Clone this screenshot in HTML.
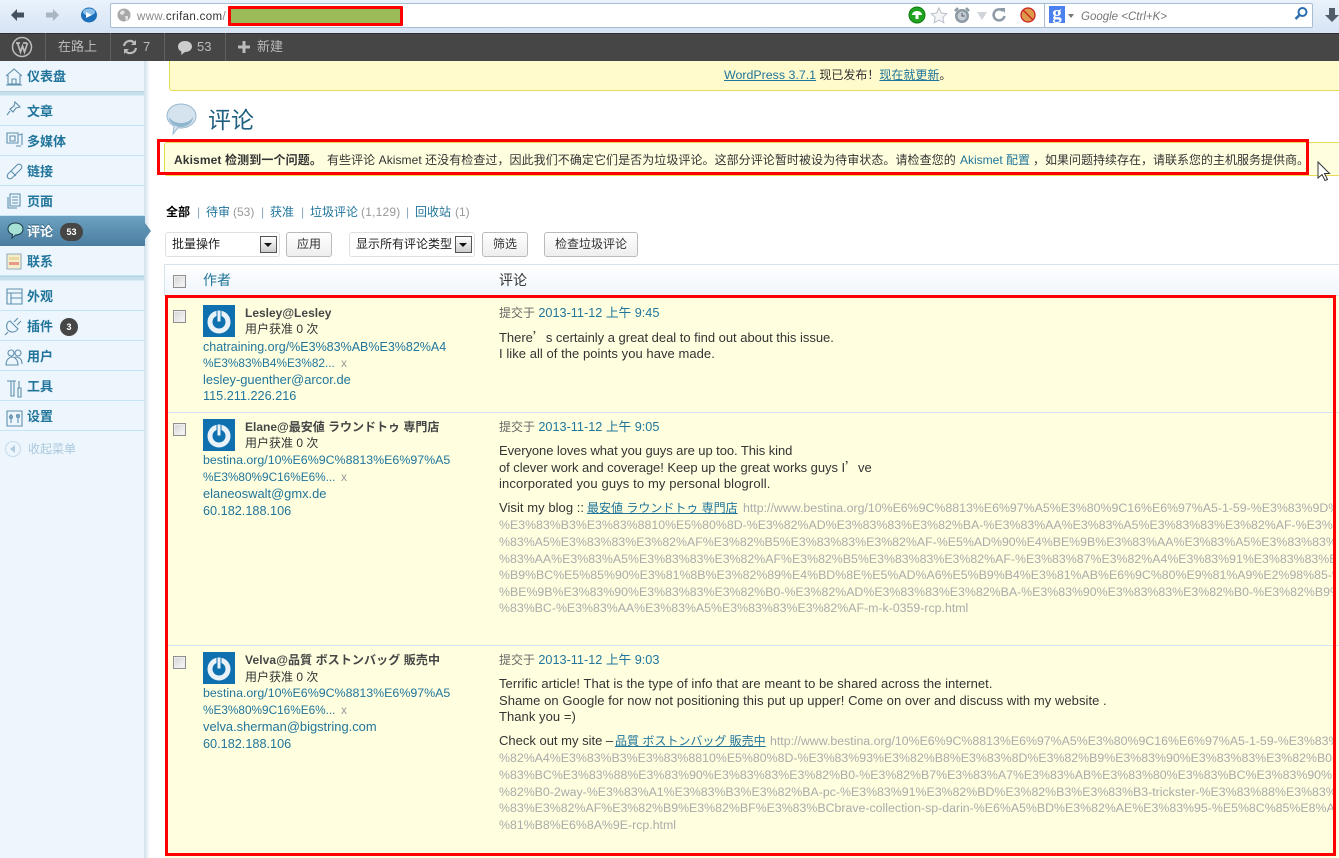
<!DOCTYPE html>
<html><head><meta charset="utf-8"><title>评论</title>
<style>
html,body{margin:0;padding:0;width:1339px;height:858px;overflow:hidden;background:#fff}
body{position:relative;font-family:"Liberation Sans","Noto Sans CJK SC",sans-serif;font-size:12px;color:#333}
.a{position:absolute}
.t{position:absolute;white-space:nowrap;line-height:16px;height:16px}
a{color:#21759b;text-decoration:none}
u{text-decoration:underline}
.m{font-weight:bold;color:#21759b;font-size:13px;left:27px}
.sep{position:absolute;left:0;width:144px;height:1px;background:#c6e4f7}
.cb{position:absolute;width:11px;height:11px;border:1px solid #8f8f8f;background:linear-gradient(135deg,#d4d4d4,#fafafa);box-shadow:inset 0 0 0 1px #eee}
.btn{position:absolute;height:23px;border:1px solid #bbb;border-radius:3px;background:linear-gradient(#fff,#eee);text-align:center;line-height:22px;color:#333;box-sizing:content-box}
.sel{position:absolute;height:23px;border:1px solid #dfdfdf;border-radius:3px;background:#fff;line-height:23px;color:#222;padding-left:6px;box-sizing:content-box}
.dd{position:absolute;right:2px;top:3px;width:15px;height:15px;border:1px solid #555;background:linear-gradient(#fff,#ccc)}
.dd:after{content:"";position:absolute;left:3px;top:6px;border:4px solid transparent;border-top:4px solid #111;border-bottom:0}
.row{position:absolute;left:165px;width:1174px;background:#ffffe0}
.ul{color:#aaa;font-size:12.35px;left:499px;width:835px;overflow:hidden;height:17px}
.c{left:499px;color:#333;font-size:13px;letter-spacing:.05px}
.q{font-family:"Noto Sans CJK SC",sans-serif}
.d{font-size:12.7px}
.u1{font-size:12.4px}
.u2{font-size:11.8px}
.e{font-size:12.9px}
.ip{font-size:12.7px}
.red{position:absolute;border:3px solid #f00;box-sizing:border-box}
.pill{position:absolute;background:#464646;color:#fff;border-radius:10px;font-size:9px;font-weight:bold;text-align:center;height:18px;line-height:18px}
.bar{color:#8aa6bd}
.n{color:#999}
</style></head><body>

<!-- browser toolbar -->
<div class="a" style="left:0;top:0;width:1339px;height:33px;background:linear-gradient(#eaf2fb,#d6e4f4)"></div>
<svg class="a" style="left:0;top:0" width="110" height="33"><path d="M11 15l6-6v3.500h7v5h-7V21z" fill="#44525f"/><path d="M59 15l-6-6v3.500h-7v5h7V21z" fill="#a9b6c2"/><ellipse cx="89" cy="15" rx="8" ry="7.500" fill="#1c6fb8"/><ellipse cx="89" cy="12" rx="6" ry="3.500" fill="#8cc0ea"/><path d="M86 12l6 3-6 3z" fill="#fff"/></svg>
<div class="a" style="left:110px;top:3px;width:1021px;height:23px;background:#fff;border:1px solid #a9bdd2;border-radius:2px"></div>
<svg class="a" style="left:117px;top:8px" width="16" height="16"><circle cx="7" cy="7" r="6.500" fill="#a8a8a8"/><path d="M3 4l3-2 2 2-2 3-3-1zM8 8l3 0 0 3-2 2z" fill="#e4e4e4"/></svg>
<div class="t" style="left:137px;top:9px;color:#888;font-size:11.500px;letter-spacing:.35px">www.<span style="color:#333">crifan.com</span>/</div>
<div class="a" style="left:228px;top:6px;width:175px;height:20px;box-sizing:border-box;border:3px solid #f00;border-radius:1px;background:#9bbb59"></div>
<svg class="a" style="left:907px;top:6px" width="100" height="20"><circle cx="10" cy="9" r="8" fill="#22a322"/><circle cx="10" cy="9" r="8" fill="none" stroke="#0d7a0d"/><path d="M5 9a5 4 0 0 1 10 0h-3.500v4h-3V9z" fill="#fff"/><path d="M32 2l2.300 5 5.500.6-4 3.800 1.100 5.400-4.900-2.700-4.900 2.700 1.100-5.400-4-3.800 5.500-.6z" fill="#f3f5f7" stroke="#b9c0c8"/><circle cx="55" cy="10" r="7" fill="#8d99a4"/><circle cx="55" cy="10" r="4.500" fill="#c6ced6"/><path d="M55 7v3h3" stroke="#556" fill="none"/><path d="M48 5l3-3M62 5l-3-3" stroke="#8d99a4" stroke-width="2.500"/><path d="M70 6h10l-5 8z" fill="#cfd5db"/><path d="M96 5a5.500 5.500 0 1 0 1.500 5" fill="none" stroke="#8e9aa6" stroke-width="2.500"/><path d="M93 2l5 0 0 5z" fill="#8e9aa6"/></svg>
<svg class="a" style="left:1019px;top:6px" width="18" height="18"><circle cx="9" cy="9" r="7" fill="#dd9a4a" stroke="#c22" stroke-width="1.300"/><path d="M4 4l10 10" stroke="#c22" stroke-width="1.300"/></svg>
<div class="a" style="left:1044px;top:3px;width:267px;height:23px;background:#fff;border:1px solid #a9bdd2;border-radius:2px"></div>
<div class="a" style="left:1049px;top:6px;width:16px;height:17px;background:#4a80f0;color:#fff;font:bold 19px/15px 'Liberation Serif',serif;text-align:center;overflow:hidden">g</div>
<div class="a" style="left:1068px;top:14px;border:3px solid transparent;border-top:4px solid #777;border-bottom:0"></div>
<div class="t" style="left:1081px;top:9px;font-style:italic;color:#777;font-size:11.500px">Google &lt;Ctrl+K&gt;</div>
<svg class="a" style="left:1293px;top:6px" width="16" height="16"><circle cx="9.500" cy="6" r="4" fill="none" stroke="#2a6db0" stroke-width="2"/><path d="M6.500 9l-4 4" stroke="#2a6db0" stroke-width="2.500"/></svg>
<svg class="a" style="left:1325px;top:7px" width="14" height="18"><path d="M4 1h6v7h4l-7 7-7-7h4z" fill="#505c68"/></svg>

<!-- admin bar -->
<div class="a" style="left:0;top:33px;width:1339px;height:28px;background:#464646;border-top:1px solid #2f2f2f;box-sizing:border-box"></div>
<svg class="a" style="left:11px;top:36px" width="22" height="22"><circle cx="11" cy="11" r="9.500" fill="none" stroke="#bbb" stroke-width="1.500"/><path d="M5 7h4M12 7h4M6.500 7l3 9 2-6 2 6 3-9" fill="none" stroke="#bbb" stroke-width="1.700"/></svg>
<div class="a" style="left:45px;top:33px;width:1px;height:28px;background:#606060"></div>
<div class="a" style="left:110px;top:33px;width:1px;height:28px;background:#606060"></div>
<div class="a" style="left:164px;top:33px;width:1px;height:28px;background:#606060"></div>
<div class="a" style="left:225px;top:33px;width:1px;height:28px;background:#606060"></div>
<div class="t" style="left:58px;top:39px;color:#bbb;font-size:13px">在路上</div>
<svg class="a" style="left:122px;top:39px" width="16" height="16"><path d="M2 7a6 6 0 0 1 10.500-3M14 9a6 6 0 0 1-10.500 3" fill="none" stroke="#bbb" stroke-width="2.200"/><path d="M14 1v5h-5zM2 15v-5h5z" fill="#bbb"/></svg>
<div class="t" style="left:143px;top:39px;color:#bbb;font-size:13px">7</div>
<svg class="a" style="left:177px;top:40px" width="16" height="16"><path d="M8 1c4 0 7 2.300 7 5.500S12 12 8 12l-4 3 .5-3.500C2 10.500 1 8.500 1 6.500 1 3.300 4 1 8 1z" fill="#ccc"/></svg>
<div class="t" style="left:197px;top:39px;color:#bbb;font-size:13px">53</div>
<svg class="a" style="left:238px;top:41px" width="12" height="12"><path d="M4.500 0h3v4.500H12v3H7.500V12h-3V7.500H0v-3h4.500z" fill="#bbb"/></svg>
<div class="t" style="left:257px;top:39px;color:#bbb;font-size:13px">新建</div>

<!-- sidebar -->
<div class="a" style="left:0;top:61px;width:145px;height:797px;background:#eef6fd"></div>
<div class="a" style="left:144px;top:61px;width:6px;height:797px;background:linear-gradient(90deg,#cfdfea,#fff)"></div>
<div class="a" style="left:0;top:91px;width:144px;height:5px;background:#c6dfeb;border-top:1px solid #b5d2e3;border-bottom:1px solid #d8ecf8;box-sizing:border-box"></div>
<div class="sep" style="top:125px"></div><div class="sep" style="top:155px"></div><div class="sep" style="top:185px"></div><div class="sep" style="top:215px"></div>
<div class="sep" style="top:275px"></div>
<div class="a" style="left:0;top:276px;width:144px;height:5px;background:#c6dfeb;border-top:1px solid #b5d2e3;border-bottom:1px solid #d8ecf8;box-sizing:border-box"></div>
<div class="sep" style="top:310px"></div><div class="sep" style="top:340px"></div><div class="sep" style="top:370px"></div><div class="sep" style="top:400px"></div><div class="sep" style="top:430px"></div>
<div class="a" style="left:0;top:216px;width:145px;height:30px;background:linear-gradient(#6da2c2,#4a7d9f)"></div>
<div class="a" style="left:145px;top:223px;border:8px solid transparent;border-left:6px solid #5a8dae;border-right:0"></div>

<svg class="a" style="left:0;top:61px" width="27" height="400" fill="none" stroke="#5e8fad" stroke-width="1.100">
<path d="M6 15l8-7 8 7M8 14v9h12v-9M12 23v-5h4v5M6 24h16"/>
<path d="M15 41l5 5-4 1-3 4-3-3 4-3zM10 50l-3 4"/>
<path d="M7 72h11v10H7zM10 75h5v5h-5zM19 74l3-1v11M16 85h5"/>
<path d="M8 113l9-9a2.500 2.500 0 0 1 4 4l-9 9a2.500 2.500 0 0 1-4-4zM11 110l5 5"/>
<path d="M10 133h10v12H10zM8 136v11h9M12 136h6M12 139h6M12 142h6"/>
<rect x="7" y="193" width="14" height="15" fill="#f5eecd" stroke="#9ab0bd"/><rect x="9" y="196" width="10" height="3" fill="#e8d9a0" stroke="none"/><rect x="9" y="201" width="10" height="3" fill="#e79a87" stroke="none"/>
<path d="M7 228h15v15H7zM7 232h15M11 232v11M11 237h11"/>
<path d="M10 260l8 8c-2 3-6 4-9 2s-3-6-1-9zM14 261l4-4M17 264l4-4M8 271l-3 3"/>
<circle cx="11" cy="292" r="3"/><circle cx="18" cy="292" r="3"/><path d="M6 304c0-6 4-8 6-8s6 2 6 8zM15 296c4 0 7 2 7 7"/>
<path d="M7 320h9M11 320v15h3v-15M19 320v7M18 327h3v9h-3z"/>
<path d="M7 350h15v15H7zM11 353v9M18 353v9"/><circle cx="11" cy="356" r="1.500"/><circle cx="18" cy="355" r="1.500"/>
<circle cx="13" cy="388" r="7.500" stroke="#c8dcea"/><path d="M15 384v8l-5-4z" fill="#b3cde0" stroke="none"/>
</svg>
<svg class="a" style="left:6px;top:222px" width="20" height="18"><path d="M9.500 1C14 1 17 3.500 17 7s-3 6-7.500 6L6 16l.5-3.500C3.500 11.500 2 9.500 2 7 2 3.500 5 1 9.500 1z" fill="#a7e0d4" stroke="#1c3d4c"/></svg>

<div class="t m" style="top:69px">仪表盘</div>
<div class="t m" style="top:104px">文章</div>
<div class="t m" style="top:134px">多媒体</div>
<div class="t m" style="top:164px">链接</div>
<div class="t m" style="top:194px">页面</div>
<div class="t m" style="top:224px;color:#fff;text-shadow:0 -1px 0 #2a5a78">评论</div>
<div class="pill" style="left:60px;top:223px;width:23px">53</div>
<div class="t m" style="top:254px">联系</div>
<div class="t m" style="top:289px">外观</div>
<div class="t m" style="top:319px">插件</div>
<div class="pill" style="left:60px;top:318px;width:18px">3</div>
<div class="t m" style="top:349px">用户</div>
<div class="t m" style="top:379px">工具</div>
<div class="t m" style="top:409px">设置</div>
<div class="t" style="left:28px;top:441px;color:#aac8dc">收起菜单</div>

<!-- nag -->
<div class="a" style="left:169px;top:61px;width:1170px;height:30px;background:#fffbcc;border:1px solid #e6db55;border-top:0;border-right:0;border-radius:0 0 0 3px;box-sizing:border-box"></div>
<div class="t" style="left:724px;top:67px;color:#333"><a href="#" style="font-size:12.400px"><u>WordPress 3.7.1</u></a> 现已发布！<a href="#"><u>现在就更新</u></a>。</div>

<!-- title -->
<svg class="a" style="left:166px;top:103px" width="32" height="34"><path d="M15 1c8 0 15 5 15 12s-7 12-15 12c-1 0-2 0-3-.2L7 31l1-8C4 21 1 17 1 13 1 6 7 1 15 1z" fill="#d4e3ee" stroke="#9ab8cc"/><path d="M3 14c3 5 8 6 12 6s9-1 12-6c0 6-6 10-12 10S3 20 3 14z" fill="#8fb5cf"/></svg>
<div class="t" style="left:208px;top:105px;font-size:23px;line-height:30px;height:30px;color:#1f5f7f">评论</div>

<!-- akismet -->
<div class="a" style="left:164px;top:142px;width:1175px;height:34px;background:#ffffe0;border:1px solid #e6db55;border-right:0;box-sizing:border-box;border-radius:3px 0 0 3px"></div>
<div class="t" style="left:174px;top:152px;color:#333;font-size:12px;letter-spacing:.12px"><b>Akismet 检测到一个问题。</b></div>
<div class="t" style="left:327px;top:152px;color:#333;font-size:12px;letter-spacing:.06px">有些评论 Akismet 还没有检查过，因此我们不确定它们是否为垃圾评论。这部分评论暂时被设为待审状态。请检查您的</div>
<div class="t" style="left:960px;top:152px"><a href="#">Akismet 配置</a></div>
<div class="t" style="left:1033px;top:152px;color:#333;font-size:12px">，如果问题持续存在，请联系您的主机服务提供商。</div>
<div class="red" style="left:157px;top:139px;width:1152px;height:36px"></div>
<svg class="a" style="left:1317px;top:161px" width="14" height="22"><path d="M1 1v16l4-3.500 3 6 2.500-1-3-6h5z" fill="#fff" stroke="#333"/></svg>

<!-- subsubsub -->
<div class="t" style="left:166px;top:204px;color:#000;font-weight:600">全部</div>
<div class="t bar" style="left:197px;top:204px">|</div>
<div class="t" style="left:206px;top:204px"><a href="#">待审</a></div>
<div class="t n" style="left:233px;top:204px">(53)</div>
<div class="t bar" style="left:261px;top:204px">|</div>
<div class="t" style="left:270px;top:204px"><a href="#">获准</a></div>
<div class="t bar" style="left:301px;top:204px">|</div>
<div class="t" style="left:310px;top:204px"><a href="#">垃圾评论</a></div>
<div class="t n" style="left:361px;top:204px;letter-spacing:.2px">(1,129)</div>
<div class="t bar" style="left:406px;top:204px">|</div>
<div class="t" style="left:415px;top:204px"><a href="#">回收站</a></div>
<div class="t n" style="left:455px;top:204px">(1)</div>

<div class="sel" style="left:165px;top:232px;width:107px">批量操作<div class="dd"></div></div>
<div class="btn" style="left:286px;top:232px;width:44px">应用</div>
<div class="sel" style="left:349px;top:232px;width:118px">显示所有评论类型<div class="dd"></div></div>
<div class="btn" style="left:482px;top:232px;width:44px">筛选</div>
<div class="btn" style="left:544px;top:232px;width:92px">检查垃圾评论</div>

<!-- table head -->
<div class="a" style="left:164px;top:264px;width:1175px;height:32px;background:linear-gradient(#fff,#eff6fc);border:1px solid #d5e3ea;border-right:0;box-sizing:border-box"></div>
<div class="cb" style="left:173px;top:275px"></div>
<div class="t" style="left:203px;top:272px;font-size:14px;color:#21759b">作者</div>
<div class="t" style="left:499px;top:272px;font-size:14px;color:#333">评论</div>

<!-- rows -->
<div class="row" style="top:296px;height:116px"></div>
<div class="a" style="left:165px;top:412px;width:1174px;height:1px;background:#d3e3f3"></div>
<div class="row" style="top:413px;height:232px"></div>
<div class="a" style="left:165px;top:645px;width:1174px;height:1px;background:#d3e3f3"></div>
<div class="row" style="top:646px;height:212px"></div>

<!-- row 1 -->
<div class="cb" style="left:173px;top:310px"></div>
<svg class="a" style="left:203px;top:305px" width="32" height="32"><rect width="32" height="32" fill="#0f70b0"/><circle cx="16" cy="17" r="9" fill="none" stroke="#e8f2f8" stroke-width="5"/><rect x="14" y="5" width="4" height="12" fill="#e8f2f8" stroke="#0f70b0"/></svg>
<div class="t" style="left:245px;top:305px;font-weight:bold;color:#464646">Lesley@Lesley</div>
<div class="t" style="left:245px;top:321px;color:#333">用户获准 0 次</div>
<div class="t" style="left:203px;top:339px;font-size:12.500px"><a href="#">chatraining.org/%E3%83%AB%E3%82%A4</a></div>
<div class="t u2" style="left:203px;top:355px"><a href="#">%E3%83%B4%E3%82...</a></div>
<div class="t n" style="left:341px;top:355px">x</div>
<div class="t e" style="left:203px;top:372px"><a href="#">lesley-guenther@arcor.de</a></div>
<div class="t ip" style="left:203px;top:388px"><a href="#">115.211.226.216</a></div>
<div class="t" style="left:499px;top:305px;color:#666">提交于 <a href="#" class="d">2013-11-12 上午 9:45</a></div>
<div class="t c" style="top:329px;letter-spacing:-.02px">There<span class="q">’</span>s certainly a great deal to find out about this issue.</div>
<div class="t c" style="top:346px">I like all of the points you have made.</div>

<!-- row 2 -->
<div class="cb" style="left:173px;top:423px"></div>
<svg class="a" style="left:203px;top:419px" width="32" height="32"><rect width="32" height="32" fill="#0f70b0"/><circle cx="16" cy="17" r="9" fill="none" stroke="#e8f2f8" stroke-width="5"/><rect x="14" y="5" width="4" height="12" fill="#e8f2f8" stroke="#0f70b0"/></svg>
<div class="t" style="left:245px;top:419px;font-weight:bold;color:#464646">Elane@最安値 ラウンドトゥ 専門店</div>
<div class="t" style="left:245px;top:435px;color:#333">用户获准 0 次</div>
<div class="t u1" style="left:203px;top:452px"><a href="#">bestina.org/10%E6%9C%8813%E6%97%A5</a></div>
<div class="t u2" style="left:203px;top:469px"><a href="#">%E3%80%9C16%E6%...</a></div>
<div class="t n" style="left:341px;top:469px">x</div>
<div class="t e" style="left:203px;top:486px"><a href="#">elaneoswalt@gmx.de</a></div>
<div class="t ip" style="left:203px;top:503px"><a href="#">60.182.188.106</a></div>
<div class="t" style="left:499px;top:419px;color:#666">提交于 <a href="#" class="d">2013-11-12 上午 9:05</a></div>
<div class="t c" style="top:443px;letter-spacing:-.07px">Everyone loves what you guys are up too. This kind</div>
<div class="t c" style="top:459px;letter-spacing:-.05px">of clever work and coverage! Keep up the great works guys I<span class="q">’</span>ve</div>
<div class="t c" style="top:476px;letter-spacing:.12px">incorporated you guys to my personal blogroll.</div>
<div class="t c" style="top:500px">Visit my blog ::</div>
<div class="t" style="left:587px;top:500px"><a href="#"><u>最安値 ラウンドトゥ 専門店</u></a></div>
<div class="t ul" style="left:743px;width:591px;top:500px">http://www.bestina.org/10%E6%9C%8813%E6%97%A5%E3%80%9C16%E6%97%A5-1-59-%E3%83%9D%E3%83%B3%E3%83%88</div>
<div class="t ul" style="top:517px">%E3%83%B3%E3%83%8810%E5%80%8D-%E3%82%AD%E3%83%83%E3%82%BA-%E3%83%AA%E3%83%A5%E3%83%83%E3%82%AF-%E3%83%90%E3%83%83%E3%82%B0</div>
<div class="t ul" style="top:534px">%83%A5%E3%83%83%E3%82%AF%E3%82%B5%E3%83%83%E3%82%AF-%E5%AD%90%E4%BE%9B%E3%83%AA%E3%83%A5%E3%83%83%E3%82%AF%E3%82%B5%E3%83%83%E3%82%AF</div>
<div class="t ul" style="top:551px">%83%AA%E3%83%A5%E3%83%83%E3%82%AF%E3%82%B5%E3%83%83%E3%82%AF-%E3%83%87%E3%82%A4%E3%83%91%E3%83%83%E3%82%AF-%E3%83%90%E3%83%83%E3%82%B0</div>
<div class="t ul" style="top:567px">%B9%BC%E5%85%90%E3%81%8B%E3%82%89%E4%BD%8E%E5%AD%A6%E5%B9%B4%E3%81%AB%E6%9C%80%E9%81%A9%E2%98%85-%E5%AD%90%E4%BE%9B%E7%94%A8</div>
<div class="t ul" style="top:584px">%BE%9B%E3%83%90%E3%83%83%E3%82%B0-%E3%82%AD%E3%83%83%E3%82%BA-%E3%83%90%E3%83%83%E3%82%B0-%E3%82%B9%E3%82%AF%E3%83%BC%E3%83%AB</div>
<div class="t ul" style="top:600px">%83%BC-%E3%83%AA%E3%83%A5%E3%83%83%E3%82%AF-m-k-0359-rcp.html</div>

<!-- row 3 -->
<div class="cb" style="left:173px;top:656px"></div>
<svg class="a" style="left:203px;top:652px" width="32" height="32"><rect width="32" height="32" fill="#0f70b0"/><circle cx="16" cy="17" r="9" fill="none" stroke="#e8f2f8" stroke-width="5"/><rect x="14" y="5" width="4" height="12" fill="#e8f2f8" stroke="#0f70b0"/></svg>
<div class="t" style="left:245px;top:652px;font-weight:bold;color:#464646;letter-spacing:.1px">Velva@品質 ボストンバッグ 販売中</div>
<div class="t" style="left:245px;top:669px;color:#333">用户获准 0 次</div>
<div class="t u1" style="left:203px;top:685px"><a href="#">bestina.org/10%E6%9C%8813%E6%97%A5</a></div>
<div class="t u2" style="left:203px;top:702px"><a href="#">%E3%80%9C16%E6%...</a></div>
<div class="t n" style="left:341px;top:702px">x</div>
<div class="t e" style="left:203px;top:719px"><a href="#">velva.sherman@bigstring.com</a></div>
<div class="t ip" style="left:203px;top:736px"><a href="#">60.182.188.106</a></div>
<div class="t" style="left:499px;top:652px;color:#666">提交于 <a href="#" class="d">2013-11-12 上午 9:03</a></div>
<div class="t c" style="top:676px">Terrific article! That is the type of info that are meant to be shared across the internet.</div>
<div class="t c" style="top:693px">Shame on Google for now not positioning this put up upper! Come on over and discuss with my website .</div>
<div class="t c" style="top:709px">Thank you =)</div>
<div class="t c" style="top:733px;letter-spacing:0">Check out my site –</div>
<div class="t" style="left:615px;top:733px"><a href="#"><u>品質 ボストンバッグ 販売中</u></a></div>
<div class="t ul" style="left:770px;width:564px;top:733px">http://www.bestina.org/10%E6%9C%8813%E6%97%A5%E3%80%9C16%E6%97%A5-1-59-%E3%83%9D%E3%82%A4</div>
<div class="t ul" style="top:750px">%82%A4%E3%83%B3%E3%83%8810%E5%80%8D-%E3%83%93%E3%82%B8%E3%83%8D%E3%82%B9%E3%83%90%E3%83%83%E3%82%B0-%E3%83%96%E3%83%A9%E3%83%B3%E3%83%89</div>
<div class="t ul" style="top:767px">%83%BC%E3%83%88%E3%83%90%E3%83%83%E3%82%B0-%E3%82%B7%E3%83%A7%E3%83%AB%E3%83%80%E3%83%BC%E3%83%90%E3%83%83%E3%82%B0-%E3%83%88</div>
<div class="t ul" style="top:784px">%82%B0-2way-%E3%83%A1%E3%83%B3%E3%82%BA-pc-%E3%83%91%E3%82%BD%E3%82%B3%E3%83%B3-trickster-%E3%83%88%E3%83%AA%E3%83%83%E3%82%AF</div>
<div class="t ul" style="top:800px">%83%E3%82%AF%E3%82%B9%E3%82%BF%E3%83%BCbrave-collection-sp-darin-%E6%A5%BD%E3%82%AE%E3%83%95-%E5%8C%85%E8%A3%85%E7%84%A1%E6%96%99</div>
<div class="t ul" style="top:817px">%81%B8%E6%8A%9E-rcp.html</div>

<!-- annotation boxes -->
<div class="red" style="left:165px;top:295px;width:1171px;height:561px"></div>
</body></html>
